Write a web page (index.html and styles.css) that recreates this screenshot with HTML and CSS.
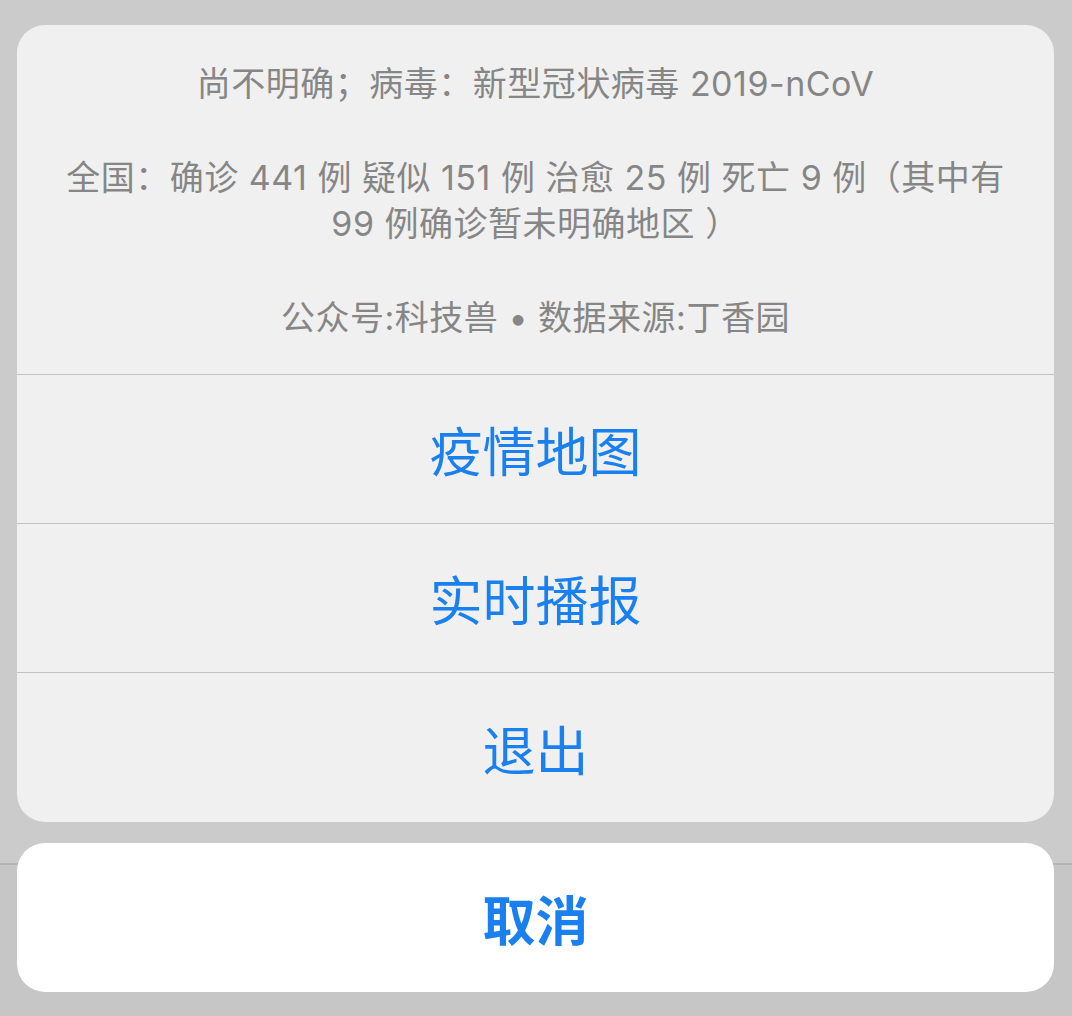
FILE: index.html
```html
<!DOCTYPE html>
<html lang="zh-CN">
<head>
<meta charset="utf-8">
<title>Action Sheet</title>
<link rel="stylesheet" href="styles.css">
</head>
<body>
<div class="screen">
  <div class="sheet">
    <div class="header">
      <p class="msg">尚不明确；病毒：新型冠状病毒 2019-nCoV</p>
      <p class="msg">全国：确诊 441 例 疑似 151 例 治愈 25 例 死亡 9 例（其中有<br>99 例确诊暂未明确地区 ）</p>
      <p class="msg">公众号:科技兽 • 数据来源:丁香园</p>
    </div>
    <div class="action">疫情地图</div>
    <div class="action">实时播报</div>
    <div class="action action-last">退出</div>
  </div>
  <div class="cancel">取消</div>
</div>
</body>
</html>
```
FILE: styles.css
```css
html, body {
  margin: 0;
  padding: 0;
  height: 100%;
}
body {
  background: linear-gradient(to bottom, #cbcbcb 0, #cbcbcb 863px, #b4b4b4 863px, #b4b4b4 865px, #c6c6c6 865px, #c6c6c6 100%);
  font-family: "Inter", "Noto Sans CJK SC", sans-serif;
}
.screen {
  padding: 25px 18px 0 17px;
  display: flex;
  flex-direction: column;
  gap: 21px;
}
.sheet {
  background: #f0f0f0;
  border-radius: 28px;
  overflow: hidden;
  display: flex;
  flex-direction: column;
}
.header {
  height: 349px;
  box-sizing: border-box;
  padding: 36px 10px 0;
  display: flex;
  flex-direction: column;
  gap: 48px;
  text-align: center;
}
.msg {
  margin: 0;
  font-size: 34px;
  letter-spacing: 0.5px;
  line-height: 46px;
  color: #868686;
  white-space: nowrap;
}
.action {
  height: 149px;
  box-sizing: border-box;
  border-top: 1px solid #c2c2c2;
  display: flex;
  align-items: center;
  justify-content: center;
  font-size: 53px;
  color: #1a80f0;
  font-family: "Noto Sans CJK SC", sans-serif;
}
.action-last {
  height: 150px;
}
.cancel {
  height: 149px;
  background: #ffffff;
  border-radius: 28px;
  display: flex;
  align-items: center;
  justify-content: center;
  font-size: 53px;
  font-weight: 600;
  color: #1a80f0;
  font-family: "Noto Sans CJK SC", sans-serif;
}
```
